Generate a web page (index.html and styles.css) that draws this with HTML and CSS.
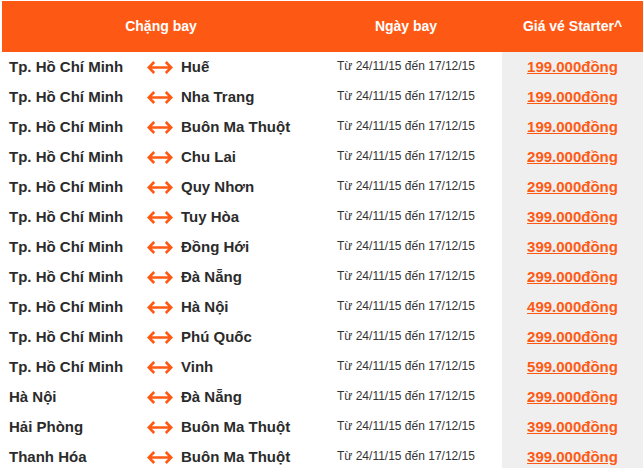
FILE: index.html
```html
<!DOCTYPE html>
<html lang="vi">
<head>
<meta charset="utf-8">
<title>Giá vé Starter</title>
<link rel="stylesheet" href="styles.css">
</head>
<body>
<svg width="0" height="0" class="defs">
  <symbol id="arr" viewBox="0 0 26 13">
    <path d="M7.2 1 L1.8 6.5 L7.2 12 M1.8 6.5 H24.2 M18.8 1 L24.2 6.5 L18.8 12" fill="none" stroke="#ff5a14" stroke-width="2.6" stroke-linejoin="miter" stroke-linecap="butt"/>
  </symbol>
</svg>
<div class="fares">
  <div class="head">
    <div class="h1">Chặng bay</div>
    <div class="h2">Ngày bay</div>
    <div class="h3">Giá vé Starter^</div>
  </div>
  <div class="row"><div class="from">Tp. Hồ Chí Minh</div><div class="arrow"><svg width="26" height="13"><use href="#arr"/></svg></div><div class="to">Huế</div><div class="date">Từ 24/11/15 đến 17/12/15</div><div class="price"><a href="#">199.000đồng</a></div></div>
  <div class="row"><div class="from">Tp. Hồ Chí Minh</div><div class="arrow"><svg width="26" height="13"><use href="#arr"/></svg></div><div class="to">Nha Trang</div><div class="date">Từ 24/11/15 đến 17/12/15</div><div class="price"><a href="#">199.000đồng</a></div></div>
  <div class="row"><div class="from">Tp. Hồ Chí Minh</div><div class="arrow"><svg width="26" height="13"><use href="#arr"/></svg></div><div class="to">Buôn Ma Thuột</div><div class="date">Từ 24/11/15 đến 17/12/15</div><div class="price"><a href="#">199.000đồng</a></div></div>
  <div class="row"><div class="from">Tp. Hồ Chí Minh</div><div class="arrow"><svg width="26" height="13"><use href="#arr"/></svg></div><div class="to">Chu Lai</div><div class="date">Từ 24/11/15 đến 17/12/15</div><div class="price"><a href="#">299.000đồng</a></div></div>
  <div class="row"><div class="from">Tp. Hồ Chí Minh</div><div class="arrow"><svg width="26" height="13"><use href="#arr"/></svg></div><div class="to">Quy Nhơn</div><div class="date">Từ 24/11/15 đến 17/12/15</div><div class="price"><a href="#">299.000đồng</a></div></div>
  <div class="row"><div class="from">Tp. Hồ Chí Minh</div><div class="arrow"><svg width="26" height="13"><use href="#arr"/></svg></div><div class="to">Tuy Hòa</div><div class="date">Từ 24/11/15 đến 17/12/15</div><div class="price"><a href="#">399.000đồng</a></div></div>
  <div class="row"><div class="from">Tp. Hồ Chí Minh</div><div class="arrow"><svg width="26" height="13"><use href="#arr"/></svg></div><div class="to">Đồng Hới</div><div class="date">Từ 24/11/15 đến 17/12/15</div><div class="price"><a href="#">399.000đồng</a></div></div>
  <div class="row"><div class="from">Tp. Hồ Chí Minh</div><div class="arrow"><svg width="26" height="13"><use href="#arr"/></svg></div><div class="to">Đà Nẵng</div><div class="date">Từ 24/11/15 đến 17/12/15</div><div class="price"><a href="#">299.000đồng</a></div></div>
  <div class="row"><div class="from">Tp. Hồ Chí Minh</div><div class="arrow"><svg width="26" height="13"><use href="#arr"/></svg></div><div class="to">Hà Nội</div><div class="date">Từ 24/11/15 đến 17/12/15</div><div class="price"><a href="#">499.000đồng</a></div></div>
  <div class="row"><div class="from">Tp. Hồ Chí Minh</div><div class="arrow"><svg width="26" height="13"><use href="#arr"/></svg></div><div class="to">Phú Quốc</div><div class="date">Từ 24/11/15 đến 17/12/15</div><div class="price"><a href="#">299.000đồng</a></div></div>
  <div class="row"><div class="from">Tp. Hồ Chí Minh</div><div class="arrow"><svg width="26" height="13"><use href="#arr"/></svg></div><div class="to">Vinh</div><div class="date">Từ 24/11/15 đến 17/12/15</div><div class="price"><a href="#">599.000đồng</a></div></div>
  <div class="row"><div class="from">Hà Nội</div><div class="arrow"><svg width="26" height="13"><use href="#arr"/></svg></div><div class="to">Đà Nẵng</div><div class="date">Từ 24/11/15 đến 17/12/15</div><div class="price"><a href="#">299.000đồng</a></div></div>
  <div class="row"><div class="from">Hải Phòng</div><div class="arrow"><svg width="26" height="13"><use href="#arr"/></svg></div><div class="to">Buôn Ma Thuột</div><div class="date">Từ 24/11/15 đến 17/12/15</div><div class="price"><a href="#">399.000đồng</a></div></div>
  <div class="row"><div class="from">Thanh Hóa</div><div class="arrow"><svg width="26" height="13"><use href="#arr"/></svg></div><div class="to">Buôn Ma Thuột</div><div class="date">Từ 24/11/15 đến 17/12/15</div><div class="price"><a href="#">399.000đồng</a></div></div>
</div>
</body>
</html>
```

FILE: styles.css
```css
html, body {
  margin: 0;
  padding: 0;
  background: #ffffff;
}
body {
  font-family: "Liberation Sans", Arial, sans-serif;
  color: #333333;
  overflow: hidden;
}
.defs {
  position: absolute;
  width: 0;
  height: 0;
}
.fares {
  margin: 1px 0 0 2px;
}
.head {
  display: grid;
  grid-template-columns: 318px 182px 141px;
  height: 51px;
  background: #fe5815;
  color: #ffffff;
  font-weight: bold;
  font-size: 14px;
  align-items: center;
}
.head > div {
  text-align: center;
  padding-bottom: 2px;
}
.head .h2 {
  padding-right: 10px;
}
.row {
  display: grid;
  grid-template-columns: 144px 35px 139px 182px 141px;
  height: 30px;
  align-items: center;
}
.row > div {
  padding-bottom: 2px;
}
.from {
  padding-left: 7px;
  font-weight: bold;
  font-size: 15px;
  color: #2b2b2b;
}
.to {
  font-weight: bold;
  font-size: 15px;
  color: #2b2b2b;
}
.row > .arrow {
  display: flex;
  align-items: center;
  padding: 1px 0 0 1px;
}
.arrow svg {
  display: block;
}
.date {
  padding-left: 17px;
  font-size: 12px;
  color: #333333;
}
.row > .price {
  background: #efefef;
  height: 100%;
  box-sizing: border-box;
  display: flex;
  align-items: center;
  justify-content: center;
}
.price a {
  color: #ff5a14;
  font-weight: bold;
  font-size: 15px;
  text-decoration: underline;
}
```
